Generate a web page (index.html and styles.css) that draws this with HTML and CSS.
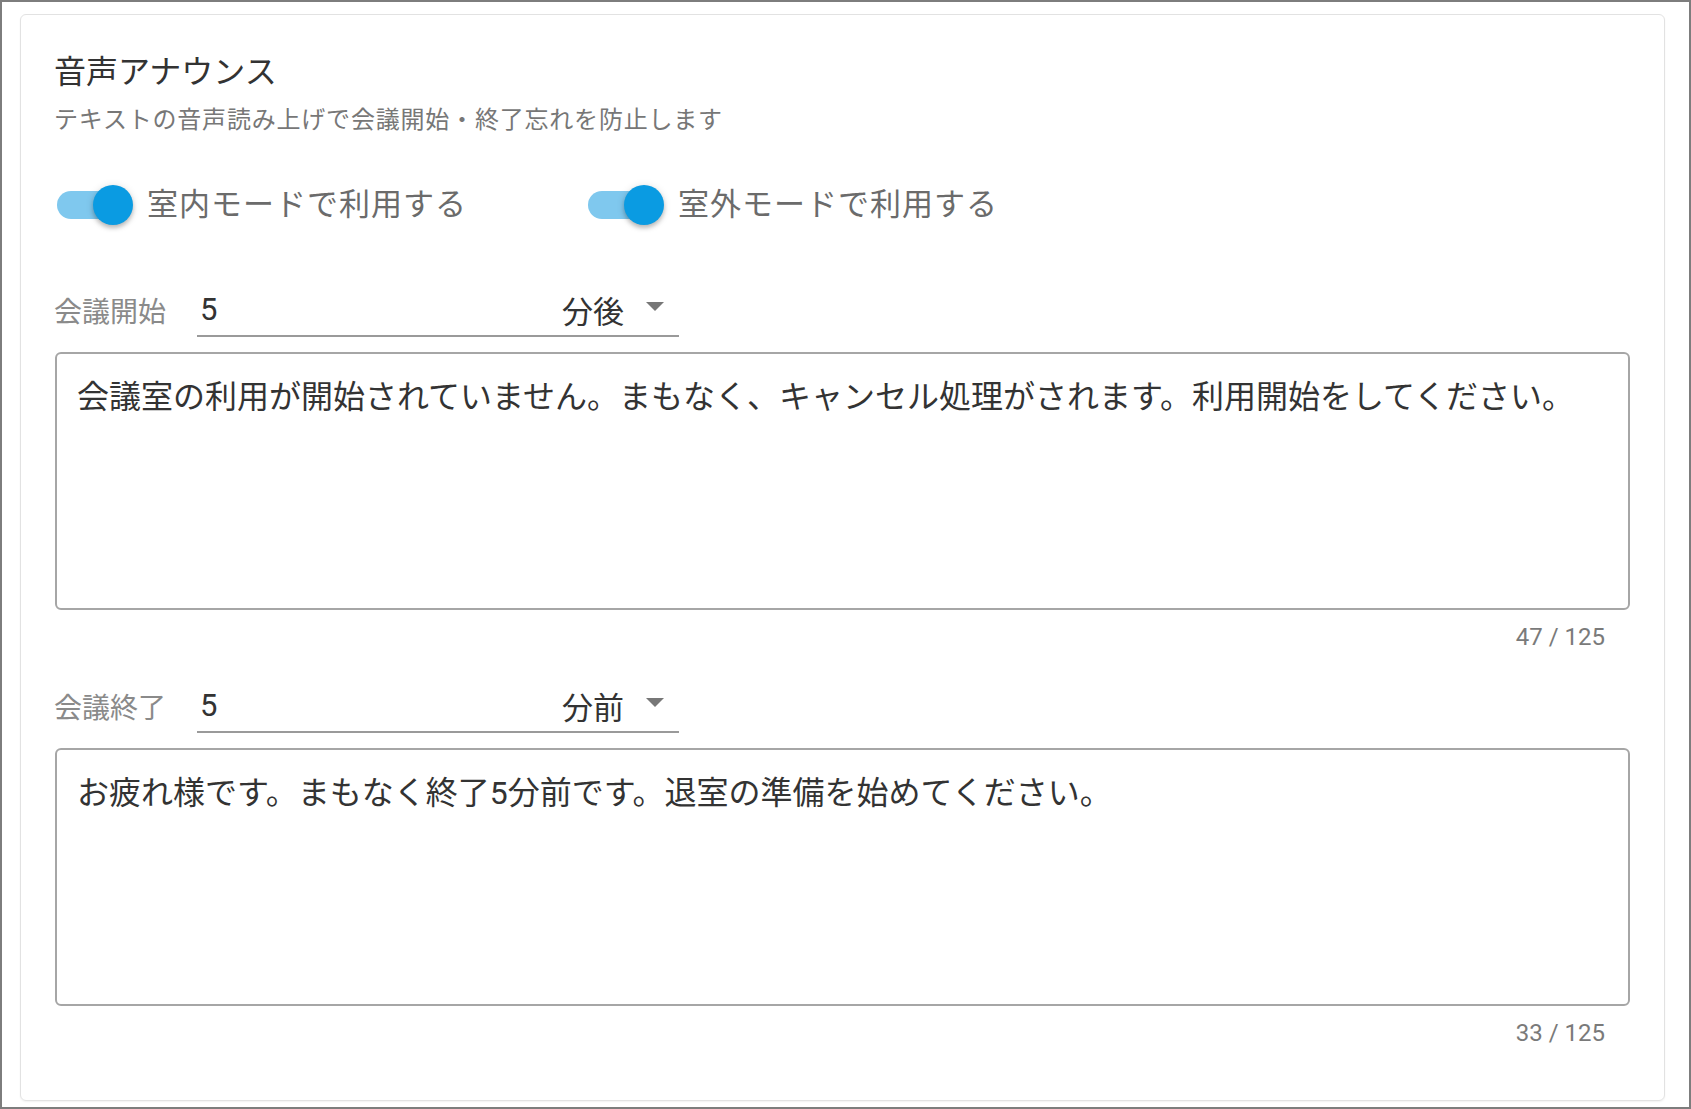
FILE: index.html
```html
<!DOCTYPE html>
<html lang="ja">
<head>
<meta charset="utf-8">
<link rel="stylesheet" href="styles.css">
</head>
<body>
<div class="frame">
  <section class="card">
    <h1 class="title">音声アナウンス</h1>
    <p class="subtitle">テキストの音声読み上げで会議開始・終了忘れを防止します</p>
    <div class="toggles">
      <label class="switch">
        <span class="track"><span class="thumb"></span></span>
        <span class="switch-label">室内モードで利用する</span>
      </label>
      <label class="switch">
        <span class="track"><span class="thumb"></span></span>
        <span class="switch-label">室外モードで利用する</span>
      </label>
    </div>

    <div class="field-row">
      <span class="field-label">会議開始</span>
      <div class="field">
        <span class="field-value">5</span>
        <span class="field-suffix">分後</span>
        <span class="caret"></span>
      </div>
    </div>
    <textarea class="message" readonly>会議室の利用が開始されていません。まもなく、キャンセル処理がされます。利用開始をしてください。</textarea>
    <div class="counter">47 / 125</div>

    <div class="field-row second">
      <span class="field-label">会議終了</span>
      <div class="field">
        <span class="field-value">5</span>
        <span class="field-suffix">分前</span>
        <span class="caret"></span>
      </div>
    </div>
    <textarea class="message" readonly>お疲れ様です。まもなく終了5分前です。退室の準備を始めてください。</textarea>
    <div class="counter">33 / 125</div>
  </section>
</div>
</body>
</html>
```

FILE: styles.css
```css
* { box-sizing: border-box; }
html, body { margin: 0; padding: 0; background: #ffffff; }
body {
  font-family: Roboto, "Noto Sans CJK JP", sans-serif;
  color: #333333;
}
.frame {
  width: 1691px;
  height: 1109px;
  border: 2px solid #7d7d7d;
  padding: 12px 0 0 18px;
}
.card {
  width: 1645px;
  height: 1087px;
  border: 1px solid #e2e2e2;
  border-radius: 6px;
  box-shadow: 0 1px 2px rgba(0,0,0,0.06);
  padding: 37px 33px 0 33px;
  display: flex;
  flex-direction: column;
}
.title {
  margin: 0;
  font-size: 32px;
  line-height: 40px;
  font-weight: 400;
  color: #333333;
}
.subtitle {
  margin: 12px 0 0 0;
  font-size: 24px;
  line-height: 32px;
  color: #777777;
  letter-spacing: 0.8px;
}
.toggles {
  margin-top: 47px;
  height: 44px;
  display: flex;
  align-items: center;
}
.switch {
  display: flex;
  align-items: center;
  width: 531px;
  padding-left: 3px;
}
.track {
  position: relative;
  width: 72px;
  height: 28px;
  border-radius: 14px;
  background: #7fc8ee;
  flex: none;
}
.thumb {
  position: absolute;
  top: -6px;
  left: 36px;
  width: 40px;
  height: 40px;
  border-radius: 50%;
  background: #0a9be2;
  box-shadow: 0 3px 4px rgba(0,0,0,0.22), 0 1px 8px rgba(0,0,0,0.12);
}
.switch-label {
  margin-left: 18px;
  font-size: 31px;
  line-height: 40px;
  color: #6b6b6b;
  letter-spacing: 1px;
}
.field-row {
  margin-top: 60px;
  display: flex;
  align-items: stretch;
  height: 50px;
}
.field-row.second { margin-top: 30px; }
.field-label {
  width: 143px;
  display: flex;
  align-items: center;
  padding-bottom: 4px;
  font-size: 28px;
  color: #8a8a8a;
}
.field {
  width: 482px;
  display: flex;
  align-items: center;
  border-bottom: 2px solid #9a9a9a;
  padding: 0 15px 4px 3px;
}
.field-value {
  font-size: 31px;
  color: #333333;
  flex: 1;
}
.field-suffix {
  font-size: 31px;
  color: #333333;
  margin-right: 22px;
}
.caret {
  width: 0;
  height: 0;
  border-left: 9px solid transparent;
  border-right: 9px solid transparent;
  border-top: 9px solid #777777;
  margin-top: -6px;
}
.message {
  display: block;
  margin: 15px 0 0 1px;
  width: 1575px;
  height: 258px;
  border: 2px solid #a6a6a6;
  border-radius: 6px;
  padding: 21px 20px;
  resize: none;
  font-family: Roboto, "Noto Sans CJK JP", sans-serif;
  font-size: 32px;
  line-height: 44px;
  color: #333333;
  background: #ffffff;
  outline: none;
}
.counter {
  margin-top: 11px;
  width: 1551px;
  text-align: right;
  font-size: 24px;
  line-height: 32px;
  color: #7a7a7a;
}
```
